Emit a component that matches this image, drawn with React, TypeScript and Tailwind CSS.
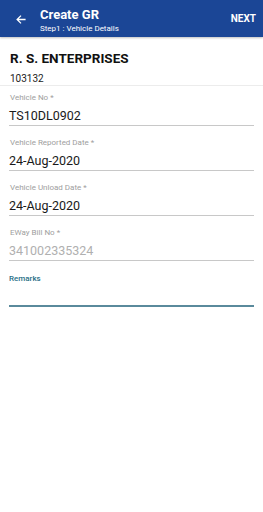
import React from "react";

const Field = ({ label, value, gray, first }: { label: string; value: string; gray?: boolean; first?: boolean }) => (
  <div className="flex flex-col">
    <div className={`text-[8px] leading-[10px] text-[#9e9e9e] pl-[1px] ${first ? "mt-[7px]" : "mt-[12px]"}`}>{label}</div>
    <div className={`text-[12.5px] leading-[16px] mt-[5px] pb-[1px] border-b border-[#c8c8c8] ${gray ? "text-[#b0b0b0]" : "text-[#1a1a1a]"}`}>{value}</div>
  </div>
);

export default function App() {
  return (
    <div className="w-[263px] h-[512px] bg-white flex flex-col" style={{ fontFamily: "Roboto, 'Liberation Sans', sans-serif" }}>
      <div className="h-[37px] bg-[#1b4696] flex items-start text-white shadow-[0_1px_2px_rgba(0,0,0,0.25)]">
        <div className="w-[40px] flex items-center justify-center pt-[14px] pl-[1px]">
          <svg width="12" height="11" viewBox="0 0 24 24" fill="none" stroke="white" strokeWidth="2.8">
            <path d="M22 12H4M12 3.5l-8.5 8.5 8.5 8.5" />
          </svg>
        </div>
        <div className="flex flex-col flex-1 pt-[7px]">
          <div className="text-[13px] leading-[15px] font-bold">Create GR</div>
          <div className="text-[8px] leading-[10px] mt-[2px]">Step1 : Vehicle Details</div>
        </div>
        <div className="text-[10px] leading-[12px] font-bold pr-[7px] pt-[13px]">NEXT</div>
      </div>
      <div className="px-[10px] pt-[13px]">
        <div className="text-[13.5px] leading-[16px] font-bold text-[#111]">R. S. ENTERPRISES</div>
        <div className="text-[10px] leading-[12px] text-[#222] mt-[7px]">103132</div>
      </div>
      <div className="border-b border-[#ececec]" />
      <div className="px-[9px] flex flex-col">
        <Field first label="Vehicle No *" value="TS10DL0902" />
        <Field label="Vehicle Reported Date *" value="24-Aug-2020" />
        <Field label="Vehicle Unload Date *" value="24-Aug-2020" />
        <Field label="EWay Bill No *" value="341002335324" gray />
        <div className="text-[8px] leading-[10px] text-[#2a7087] font-medium mt-[13px]">Remarks</div>
        <div className="h-[23px] border-b-2 border-[#5a8a9c]" />
      </div>
    </div>
  );
}
